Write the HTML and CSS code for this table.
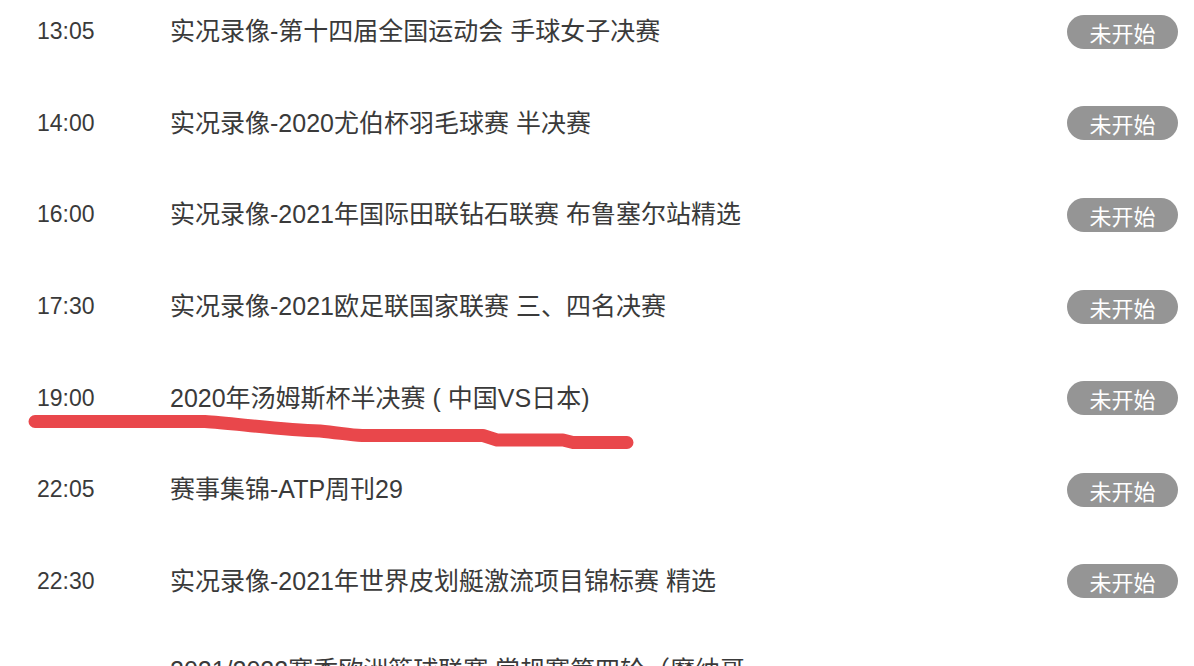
FILE: index.html
```html
<!DOCTYPE html>
<html lang="zh-CN">
<head>
<meta charset="utf-8">
<title>赛事列表</title>
<link rel="stylesheet" href="styles.css">
</head>
<body>
<ul class="schedule">
  <li class="row"><span class="time">13:05</span><span class="title">实况录像-第十四届全国运动会 手球女子决赛</span><span class="badge">未开始</span></li>
  <li class="row"><span class="time">14:00</span><span class="title">实况录像-2020尤伯杯羽毛球赛 半决赛</span><span class="badge">未开始</span></li>
  <li class="row"><span class="time">16:00</span><span class="title">实况录像-2021年国际田联钻石联赛 布鲁塞尔站精选</span><span class="badge">未开始</span></li>
  <li class="row"><span class="time">17:30</span><span class="title">实况录像-2021欧足联国家联赛 三、四名决赛</span><span class="badge">未开始</span></li>
  <li class="row"><span class="time">19:00</span><span class="title">2020年汤姆斯杯半决赛 ( 中国VS日本)</span><span class="badge">未开始</span></li>
  <li class="row"><span class="time">22:05</span><span class="title">赛事集锦-ATP周刊29</span><span class="badge">未开始</span></li>
  <li class="row"><span class="time">22:30</span><span class="title">实况录像-2021年世界皮划艇激流项目锦标赛 精选</span><span class="badge">未开始</span></li>
  <li class="row"><span class="time">23:00</span><span class="title">2021/2022赛季欧洲篮球联赛 常规赛第四轮（摩纳哥VS皇家马德里）</span><span class="badge">未开始</span></li>
</ul>
<svg class="mark" width="1194" height="666" viewBox="0 0 1194 666" aria-hidden="true">
  <path d="M35 421.5 L205 421.5 C232 423 280 430 320 431 C340 433 350 435 362 435.5 L483 435.5 L497 440 L563 440 L573 442.5 L627 442.5" fill="none" stroke="#e9474b" stroke-width="13" stroke-linecap="round" stroke-linejoin="round"/>
</svg>
</body>
</html>
```
FILE: styles.css
```css
html, body {
  margin: 0;
  padding: 0;
  background: #ffffff;
  overflow: hidden;
  height: 666px;
}
body {
  font-family: "Liberation Sans", "Noto Sans CJK SC", sans-serif;
  color: #3a3a3a;
  position: relative;
}
.schedule {
  list-style: none;
  margin: -14px 0 0 0;
  padding: 0 16px 0 37px;
}
.row {
  display: flex;
  align-items: center;
  box-sizing: border-box;
  min-height: 91.6px;
  padding: 26px 0;
}
.time {
  width: 133px;
  flex: none;
  font-size: 23px;
}
.title {
  flex: 0 1 auto;
  max-width: 600px;
  margin-right: auto;
  font-size: 25px;
  line-height: 35px;
}
.badge {
  flex: none;
  width: 111px;
  height: 34px;
  border-radius: 17px;
  background: #959595;
  color: #ffffff;
  font-size: 22px;
  display: flex;
  align-items: center;
  justify-content: center;
}
.mark {
  position: absolute;
  left: 0;
  top: 0;
  pointer-events: none;
}
```
